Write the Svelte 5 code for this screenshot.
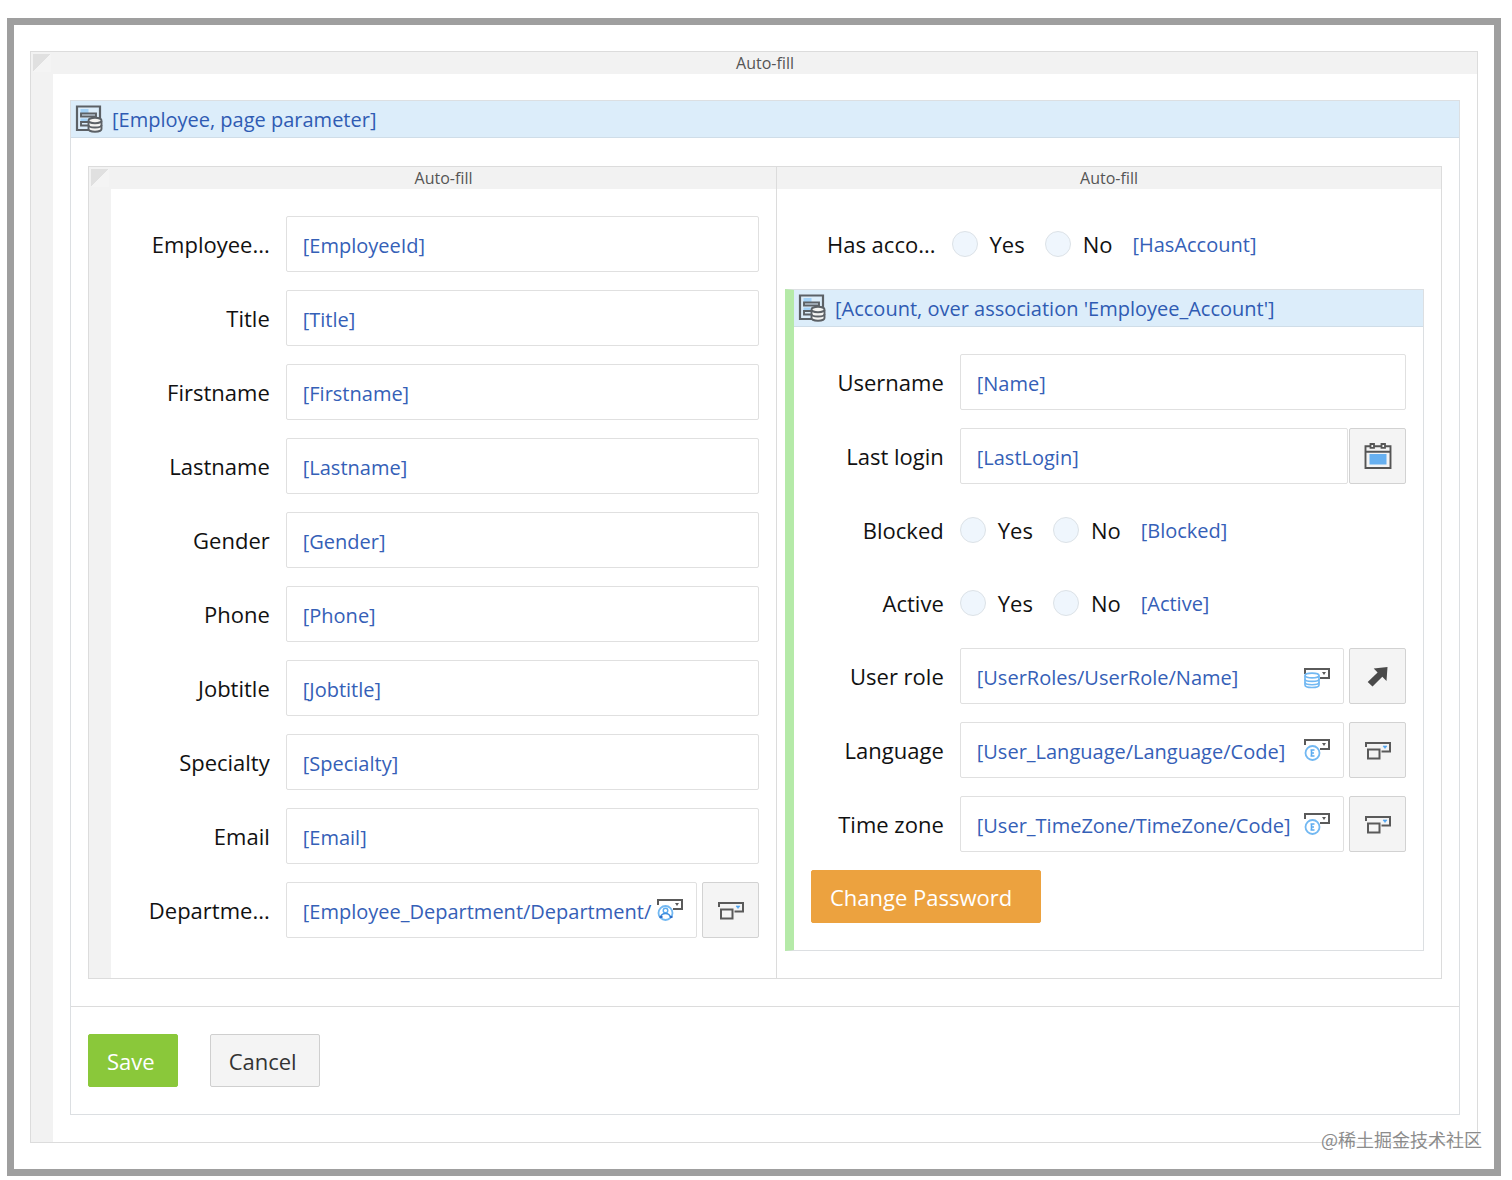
<script lang="ts">
	type Field = {
		id: string;
		label: string;
		value: string;
		kind?: 'text' | 'date' | 'radio' | 'reference';
		badge?: 'entity' | 'enum' | 'person';
		action?: 'select' | 'open';
	};

	const employeeFields: Field[] = [
		{ id: 'employee-id', label: 'Employee...', value: '[EmployeeId]' },
		{ id: 'title', label: 'Title', value: '[Title]' },
		{ id: 'firstname', label: 'Firstname', value: '[Firstname]' },
		{ id: 'lastname', label: 'Lastname', value: '[Lastname]' },
		{ id: 'gender', label: 'Gender', value: '[Gender]' },
		{ id: 'phone', label: 'Phone', value: '[Phone]' },
		{ id: 'jobtitle', label: 'Jobtitle', value: '[Jobtitle]' },
		{ id: 'specialty', label: 'Specialty', value: '[Specialty]' },
		{ id: 'email', label: 'Email', value: '[Email]' },
		{
			id: 'department',
			label: 'Departme...',
			value: '[Employee_Department/Department/',
			kind: 'reference',
			badge: 'person',
			action: 'select'
		}
	];

	const hasAccount: Field = {
		id: 'has-account',
		label: 'Has acco...',
		value: '[HasAccount]',
		kind: 'radio'
	};

	const accountFields: Field[] = [
		{ id: 'username', label: 'Username', value: '[Name]' },
		{ id: 'last-login', label: 'Last login', value: '[LastLogin]', kind: 'date' },
		{ id: 'blocked', label: 'Blocked', value: '[Blocked]', kind: 'radio' },
		{ id: 'active', label: 'Active', value: '[Active]', kind: 'radio' },
		{
			id: 'user-role',
			label: 'User role',
			value: '[UserRoles/UserRole/Name]',
			kind: 'reference',
			badge: 'entity',
			action: 'open'
		},
		{
			id: 'language',
			label: 'Language',
			value: '[User_Language/Language/Code]',
			kind: 'reference',
			badge: 'enum',
			action: 'select'
		},
		{
			id: 'time-zone',
			label: 'Time zone',
			value: '[User_TimeZone/TimeZone/Code]',
			kind: 'reference',
			badge: 'enum',
			action: 'select'
		}
	];
</script>

{#snippet dataViewIcon()}
	<svg class="view-icon" width="28" height="28" viewBox="0 0 28 28" fill="none" aria-hidden="true">
		<path d="M14 25H2V1.500h23V13" stroke="#5c6166" stroke-width="2.200" />
		<path d="M5.500 4h8v4h-8zM5.500 13.500h7v3h-7z" fill="#a4d2f7" />
		<path d="M6 8.500h15v3H6zM13 17H6v3.500h7" stroke="#5c6166" stroke-width="1.900" />
		<path
			d="M13.500 16v8c0 1.400 2.800 2.700 6.500 2.700s6.500-1.300 6.500-2.700v-8"
			fill="#f4f4f2"
			stroke="#5c6166"
			stroke-width="1.900"
		/>
		<ellipse cx="20" cy="15.500" rx="6.500" ry="2.800" fill="#f4f4f2" stroke="#5c6166" stroke-width="1.900" />
		<path
			d="M13.500 20c0 1.400 2.800 2.500 6.500 2.500s6.500-1.100 6.500-2.500"
			stroke="#5c6166"
			stroke-width="1.900"
		/>
	</svg>
{/snippet}

{#snippet badgeIcon(badge)}
	<svg class="badge-icon" class:low={badge === 'entity'} width="28" height="24" viewBox="0 0 28 24" fill="none" aria-hidden="true">
		<path d="M2 7V2h24v9h-9" stroke="#5a5a5a" stroke-width="2" />
		<path d="M19 5h4l-2 3z" fill="#5a5a5a" />
		{#if badge === 'entity'}
			<path
				d="M2 8.500v9.500c0 1.500 3 2.500 7 2.500s7-1 7-2.500V8.500"
				fill="#fff"
				stroke="#72b8f2"
				stroke-width="1.700"
			/>
			<ellipse cx="9" cy="8.500" rx="7" ry="2.400" fill="#fff" stroke="#72b8f2" stroke-width="1.700" />
			<path
				d="M2 12c0 1.400 3 2.400 7 2.400s7-1 7-2.400M2 15.300c0 1.400 3 2.400 7 2.400s7-1 7-2.400"
				stroke="#72b8f2"
				stroke-width="1.600"
			/>
		{:else}
			<circle cx="9.500" cy="15" r="7" fill={badge === 'enum' ? '#fff' : 'none'} stroke="#72b8f2" stroke-width="1.800" />
			{#if badge === 'enum'}
				<path d="M11.500 12H8.500v6h3M8.500 15h2.500M7.500 12h2M7.500 18h2" stroke="#5cacf0" stroke-width="1.600" />
			{:else}
				<circle cx="9.500" cy="12.500" r="2.300" stroke="#5cacf0" stroke-width="1.400" />
				<path d="M4.500 19.500c.6-3 2.500-4 5-4s4.400 1 5 4" stroke="#3f8fe0" stroke-width="1.500" />
				<path d="M3.500 18h3v2h-3zM14 18h2.500v2H14z" fill="#2d6cc6" />
			{/if}
		{/if}
	</svg>
{/snippet}

{#snippet selectIcon()}
	<svg width="28" height="20" viewBox="0 0 28 20" fill="none" aria-hidden="true">
		<path d="M2 7V3h24v8.500h-8.500" stroke="#5a5a5a" stroke-width="2" />
		<rect x="4" y="9.500" width="11.500" height="9" stroke="#5a5a5a" stroke-width="2" />
		<path d="M19 6h4l-2 2.500z" fill="#4fa3ee" stroke="#4fa3ee" stroke-width=".6" />
	</svg>
{/snippet}

{#snippet openIcon()}
	<svg width="24" height="24" viewBox="0 0 24 24" aria-hidden="true">
		<path d="M21.500 3 20.500 17l-4.200-4.200L6.500 22.500 1.700 18l9.900-9.600L7.700 4.500z" fill="#4a4a4a" />
	</svg>
{/snippet}

{#snippet calendarIcon()}
	<svg width="28" height="28" viewBox="0 0 28 28" fill="none" aria-hidden="true">
		<path d="M1.500 4.200h25v21.800h-25zM1.500 9.700h25" stroke="#555" stroke-width="1.900" />
		<path d="M6.500 2h3.500v3.800H6.500zM17.500 2H21v3.800h-3.500z" fill="#f4f4f4" stroke="#555" stroke-width="1.800" />
		<path d="M5.500 12h17v10.500h-17z" fill="#67b0f0" />
	</svg>
{/snippet}

{#snippet row(field)}
	{#if field.kind === 'radio'}
		<div class="row radio-row" role="radiogroup" aria-labelledby="{field.id}-label">
			<span class="label" id="{field.id}-label">{field.label}</span>
			<div class="options">
				<label><input type="radio" name={field.id} value="yes" />Yes</label>
				<label><input type="radio" name={field.id} value="no" />No</label>
				<span class="binding">{field.value}</span>
			</div>
		</div>
	{:else}
		<div class="row">
			<label class="label" for={field.id}>{field.label}</label>
			<div class="control" class:date={field.kind === 'date'}>
				<div class="input-wrapper">
					<input type="text" id={field.id} value={field.value} />
					{#if field.badge}
						{@render badgeIcon(field.badge)}
					{/if}
				</div>
				{#if field.kind === 'date'}
					<button class="icon-button" type="button" aria-label="Pick a date">
						{@render calendarIcon()}
					</button>
				{:else if field.action === 'open'}
					<button class="icon-button" type="button" aria-label="Open {field.label}">
						{@render openIcon()}
					</button>
				{:else if field.action === 'select'}
					<button class="icon-button" type="button" aria-label="Select {field.label}">
						{@render selectIcon()}
					</button>
				{/if}
			</div>
		</div>
	{/if}
{/snippet}

<div class="page">
	<main class="frame">
		<div class="layout-grid">
			<div class="corner"></div>
			<div class="column-head">Auto-fill</div>
			<div class="side"></div>
			<div class="outer-cell">
				<section class="data-view">
					<header class="view-header">
						{@render dataViewIcon()}
						<span>[Employee, page parameter]</span>
					</header>
					<div class="view-body">
						<div class="layout-grid two-columns">
							<div class="corner"></div>
							<div class="column-head">Auto-fill</div>
							<div class="column-head divided">Auto-fill</div>
							<div class="side"></div>
							<div class="cell">
								{#each employeeFields as field (field.id)}
									{@render row(field)}
								{/each}
							</div>
							<div class="cell divided">
								{@render row(hasAccount)}
								<section class="data-view account">
									<header class="view-header">
										{@render dataViewIcon()}
										<span>[Account, over association 'Employee_Account']</span>
									</header>
									<div class="account-body">
										{#each accountFields as field (field.id)}
											{@render row(field)}
										{/each}
										<button class="btn warning" type="button">Change Password</button>
									</div>
								</section>
							</div>
						</div>
					</div>
					<footer class="view-footer">
						<button class="btn success" type="button">Save</button>
						<button class="btn" type="button">Cancel</button>
					</footer>
				</section>
			</div>
		</div>
		<span class="watermark">@稀土掘金技术社区</span>
	</main>
</div>

<style>
	:global(body) {
		margin: 0;
		background: #fff;
	}
	.page,
	.page * {
		box-sizing: border-box;
	}
	.page {
		padding: 18px 11px 4px 7px;
		font-family: 'Open Sans', 'Noto Sans', sans-serif;
		font-size: 22px;
		line-height: 30px;
		color: #111;
	}
	.frame {
		position: relative;
		padding: 26px 16px;
		border: 7px solid #9f9f9f;
	}

	/* --- Layout grids --- */
	.layout-grid {
		display: grid;
		grid-template-columns: 22px minmax(0, 1fr);
		grid-template-rows: 22px auto;
		border: 1px solid #dcdcdc;
	}
	.two-columns {
		grid-template-columns: 22px minmax(0, 1fr) minmax(0, 1fr);
	}
	.corner {
		border: 2px solid #f2f2f2;
		background: linear-gradient(135deg, #e0e0e0 0 48%, #f4f4f4 48%);
	}
	.side {
		background: #f2f2f2;
	}
	.column-head {
		background: #f2f2f2;
		color: #555;
		font-size: 16px;
		line-height: 22px;
		text-align: center;
	}
	.divided {
		border-left: 1px solid #dcdcdc;
	}
	.outer-cell {
		padding: 26px 17px 27px;
	}
	.cell {
		padding: 27px 17px 22px;
	}

	/* --- Data views --- */
	.data-view {
		border: 1px solid #dcdfe2;
	}
	.view-header {
		display: flex;
		align-items: center;
		gap: 9px;
		height: 37px;
		padding-left: 4px;
		background: #dcedfa;
		border-bottom: 1px solid #cfdde8;
		color: #2f5bb3;
		font-size: 20px;
	}
	.view-header span {
		padding-top: 2px;
	}
	.view-icon {
		flex: none;
	}
	.view-body {
		padding: 28px 17px 27px;
	}
	.view-footer {
		display: flex;
		gap: 32px;
		padding: 27px 17px;
		border-top: 1px solid #dcdcdc;
	}
	.account {
		margin-left: -9px;
		border-left: 9px solid #b5eaa8;
	}
	.account-body {
		padding: 27px 17px;
	}

	/* --- Form rows --- */
	.row {
		display: grid;
		grid-template-columns: 25% minmax(0, 1fr);
		align-items: center;
		height: 56px;
		margin-bottom: 18px;
	}
	.radio-row {
		height: 55px;
	}
	.label {
		padding-right: 16px;
		text-align: right;
		white-space: nowrap;
	}
	.control {
		display: flex;
		gap: 5px;
	}
	.control.date {
		gap: 1px;
	}
	.input-wrapper {
		position: relative;
		flex: 1;
		min-width: 0;
	}
	.input-wrapper input {
		display: block;
		width: 100%;
		height: 56px;
		padding: 2px 16px 0;
		border: 1px solid #e0e0e0;
		border-radius: 2px;
		background: #fff;
		color: #3560b7;
		font-family: inherit;
		font-size: 20px;
	}
	.badge-icon {
		position: absolute;
		top: 16px;
		right: 13px;
	}
	.badge-icon.low {
		top: 19px;
	}
	.icon-button {
		display: flex;
		align-items: center;
		justify-content: center;
		flex: none;
		width: 57px;
		height: 56px;
		padding: 0;
		border: 1px solid #d2d2d2;
		border-radius: 2px;
		background: #f4f4f4;
	}
	.options {
		display: flex;
		align-items: center;
	}
	.options label {
		display: flex;
		align-items: center;
		gap: 12px;
		margin-right: 20px;
	}
	.options input {
		appearance: none;
		width: 26px;
		height: 26px;
		margin: 0;
		border: 1px solid #dce2e7;
		border-radius: 50%;
		background: #eff6fd;
	}
	.binding {
		padding-top: 2px;
		color: #3560b7;
		font-size: 20px;
	}

	/* --- Buttons --- */
	.btn {
		height: 53px;
		padding: 0 22px 0 18px;
		border: 1px solid #cfcfcf;
		border-radius: 2px;
		background: #f4f4f4;
		color: #333;
		font-family: inherit;
		font-size: 22px;
	}
	.success {
		border-color: #8ac83a;
		background: #8ac83a;
		color: #fff;
	}
	.warning {
		display: block;
		padding-right: 28px;
		border-color: #eca23f;
		background: #eca23f;
		color: #fff;
	}

	.watermark {
		position: absolute;
		right: 12px;
		bottom: 16px;
		color: #8c8c8c;
		font-family: 'Noto Sans CJK SC', sans-serif;
		font-size: 18px;
		line-height: 28px;
	}
</style>
